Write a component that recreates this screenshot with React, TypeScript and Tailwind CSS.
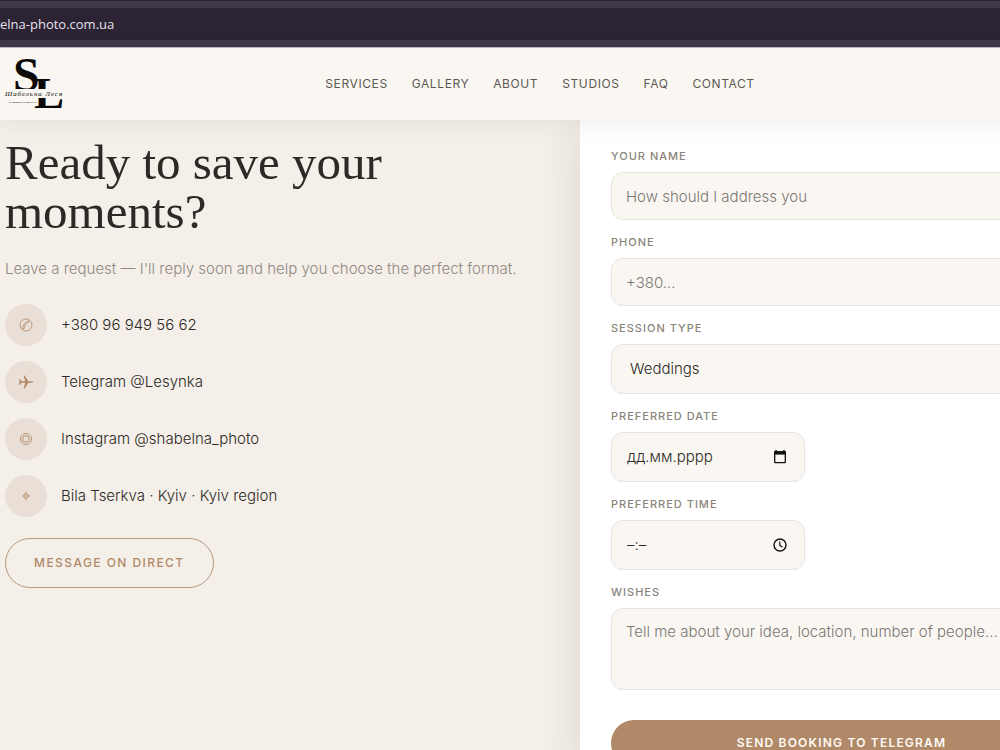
import type { ReactNode } from "react";

const NAV_ITEMS = ["Services", "Gallery", "About", "Studios", "FAQ", "Contact"];

const FIELD =
  "w-full rounded-xl border border-[#e8e4df] bg-[#faf7f2] px-[14px] font-light text-[#2c2a26] outline-none placeholder:text-[#7b7873]";

function PhoneIcon() {
  return (
    <svg viewBox="0 0 14 14" className="size-[14px]" fill="none" stroke="currentColor" strokeWidth="0.8">
      <circle cx="7" cy="7" r="6" />
      <path d="M3.600 10.900C3.400 8 5.800 4 9.900 2.900M3.600 10.900l1.500-.5C5 7.800 6.900 5.400 9.600 4.200L9.900 2.900" />
    </svg>
  );
}

function PlaneIcon() {
  return (
    <svg viewBox="0 0 16 16" className="size-4" fill="currentColor">
      <path d="M1 5.200h1l1.600 2.100h3.600L5.600 1.500h1l3.800 5.800h3.200c.9 0 1.400.4 1.400.7s-.5.7-1.400.7h-3.200l-3.800 5.800h-1l1.600-5.800H3.600L2 10.800H1L1.700 8z" />
    </svg>
  );
}

function CameraIcon() {
  return (
    <svg viewBox="0 0 14 14" className="size-[14px]" fill="none" stroke="currentColor" strokeWidth="0.9">
      <circle cx="7" cy="7" r="5.500" />
      <circle cx="7" cy="7" r="3.300" />
    </svg>
  );
}

function PinIcon() {
  return (
    <svg viewBox="0 0 10 10" className="size-[10px]" fill="none" stroke="currentColor" strokeWidth="0.8">
      <circle cx="5" cy="5" r="2.400" />
      <path d="M5 0.500v9M1.200 5h7.600" strokeWidth="0.6" />
    </svg>
  );
}

const CONTACTS: { icon: ReactNode; text: string; href: string }[] = [
  { icon: <PhoneIcon />, text: "+380 96 949 56 62", href: "tel:+380969495662" },
  { icon: <PlaneIcon />, text: "Telegram @Lesynka", href: "#telegram" },
  { icon: <CameraIcon />, text: "Instagram @shabelna_photo", href: "#instagram" },
  { icon: <PinIcon />, text: "Bila Tserkva · Kyiv · Kyiv region", href: "#map" },
];

function Logo() {
  return (
    <svg
      viewBox="0 0 60 54"
      className="h-[54px] w-[60px] overflow-visible"
      fontFamily="Liberation Serif, serif"
      fill="#0b0a09"
    >
      <text x="9" y="34" fontSize="48" fontWeight="bold">S</text>
      <text x="30" y="51" fontSize="45" fontWeight="bold">L</text>
      <rect x="0" y="32" width="60" height="9" fill="#faf7f2" />
      <rect x="0" y="41" width="34" height="6" fill="#faf7f2" />
      <text x="1" y="39" fontSize="7" fontStyle="italic" letterSpacing="0.9">
        Шабельна Леся
      </text>
      <text x="5" y="46" fontSize="2.500" fontFamily="Liberation Sans, sans-serif">PHOTOGRAPHER KYIV</text>
    </svg>
  );
}

function CalendarIcon() {
  return (
    <svg viewBox="0 0 14 14" className="size-[14px]">
      <path d="M3 0v2M11 0v2" stroke="#111" strokeWidth="1.500" />
      <rect x="1.700" y="1.900" width="10.600" height="10.800" rx="0.600" fill="none" stroke="#111" strokeWidth="1.300" />
      <path d="M1.200 1.300h11.600v3.300H1.200z" fill="#111" />
    </svg>
  );
}

function ClockIcon() {
  return (
    <svg viewBox="0 0 14 14" className="size-[14px]" fill="none" stroke="#111">
      <circle cx="7" cy="7" r="6" strokeWidth="1.400" />
      <path d="M6.800 3.500v3.700l2.700 2" strokeWidth="1.200" />
    </svg>
  );
}

function Field({ id, label, children }: { id: string; label: string; children: ReactNode }) {
  return (
    <div className="flex flex-col gap-2">
      <label htmlFor={id} className="text-[11px] leading-4 font-medium tracking-[1px] text-[#8a847c] uppercase">
        {label}
      </label>
      {children}
    </div>
  );
}

function PickerField({ id, label, placeholder, icon }: { id: string; label: string; placeholder: string; icon: ReactNode }) {
  return (
    <Field id={id} label={label}>
      <div className="flex h-[50px] w-[194px] items-center rounded-xl border border-[#e8e4df] bg-[#faf7f2] pr-[17px] pl-[15px]">
        <input
          id={id}
          type="text"
          placeholder={placeholder}
          className="min-w-0 flex-1 bg-transparent font-light outline-none placeholder:text-[#2c2a26]"
        />
        <button type="button" aria-label={`Open ${label.toLowerCase()} picker`}>
          {icon}
        </button>
      </div>
    </Field>
  );
}

export default function App() {
  return (
    <div className="flex h-screen flex-col overflow-hidden bg-[#f5efe9] font-['Inter',sans-serif] text-[15px] text-[#2c2a26]">
      {/* Browser bar */}
      <div className="shrink-0 border-t border-b border-t-[#2c2335] border-b-[#c3bcc0] bg-[#41384a] py-[7px]">
        <div className="flex h-8 items-center bg-[#2c2335] pt-[2px] font-['Open_Sans',sans-serif] text-[13px] text-[#e6e1ea]">
          elna-photo.com.ua
        </div>
      </div>

      <header className="relative z-10 w-[110%] shrink-0 bg-[#faf7f2] shadow-[0_4px_24px_rgba(44,42,38,0.07)]">
        <div className="grid h-[72px] grid-cols-[1fr_auto_1fr] items-center pr-6 pl-1">
          <a href="#home" aria-label="Shabelna Lesya">
            <Logo />
          </a>
          <nav className="flex gap-6 text-[12px] tracking-wider text-[#5c5852] uppercase">
            {NAV_ITEMS.map((item) => (
              <a key={item} href={`#${item.toLowerCase()}`}>
                {item}
              </a>
            ))}
          </nav>
        </div>
      </header>

      <main className="grid w-[110%] flex-1 grid-cols-[29fr_26fr]">
        <section className="px-[5px] pt-[18px]">
          <h2 className="max-w-[460px] font-['Liberation_Serif',serif] text-[49px] leading-[49px]">
            Ready to save your moments?
          </h2>
          <p className="mt-[21px] leading-6 font-light whitespace-nowrap text-[#8f8982]">
            Leave a request — I'll reply soon and help you choose the perfect format.
          </p>
          <ul className="mt-[23px] flex flex-col gap-[15px]">
            {CONTACTS.map((contact) => (
              <li key={contact.text}>
                <a href={contact.href} className="flex items-center gap-[14px] font-light">
                  <span className="flex size-[42px] items-center justify-center rounded-full bg-[#e9dfd6] text-[#b08968]">
                    {contact.icon}
                  </span>
                  {contact.text}
                </a>
              </li>
            ))}
          </ul>
          <a
            href="#direct"
            className="mt-[21px] inline-flex h-[50px] items-center rounded-full border border-[#b9987c] px-7 text-[12px] font-medium tracking-[0.12em] text-[#b08968] uppercase"
          >
            Message on Direct
          </a>
        </section>

        <section className="bg-white pt-7 pr-7 pl-[31px] shadow-[0_10px_40px_rgba(44,42,38,0.12)]">
          <form className="flex flex-col gap-[14px]">
            <Field id="name" label="Your name">
              <input id="name" type="text" placeholder="How should I address you" className={`${FIELD} h-12`} />
            </Field>
            <Field id="phone" label="Phone">
              <input id="phone" type="tel" placeholder="+380..." className={`${FIELD} h-12`} />
            </Field>
            <Field id="session" label="Session type">
              <select id="session" className={`${FIELD} h-[50px] appearance-none indent-1`}>
                <option>Weddings</option>
              </select>
            </Field>
            <PickerField id="date" label="Preferred date" placeholder="дд.мм.рррр" icon={<CalendarIcon />} />
            <PickerField id="time" label="Preferred time" placeholder="–:–" icon={<ClockIcon />} />
            <Field id="wishes" label="Wishes">
              <textarea
                id="wishes"
                placeholder="Tell me about your idea, location, number of people..."
                className={`${FIELD} h-[82px] resize-none py-3`}
              />
            </Field>
            <button
              type="submit"
              className="mt-4 h-[46px] rounded-full bg-[#b08968] text-[12px] font-semibold tracking-widest text-[#fffaf5] uppercase"
            >
              Send booking to Telegram
            </button>
          </form>
        </section>
      </main>
    </div>
  );
}
